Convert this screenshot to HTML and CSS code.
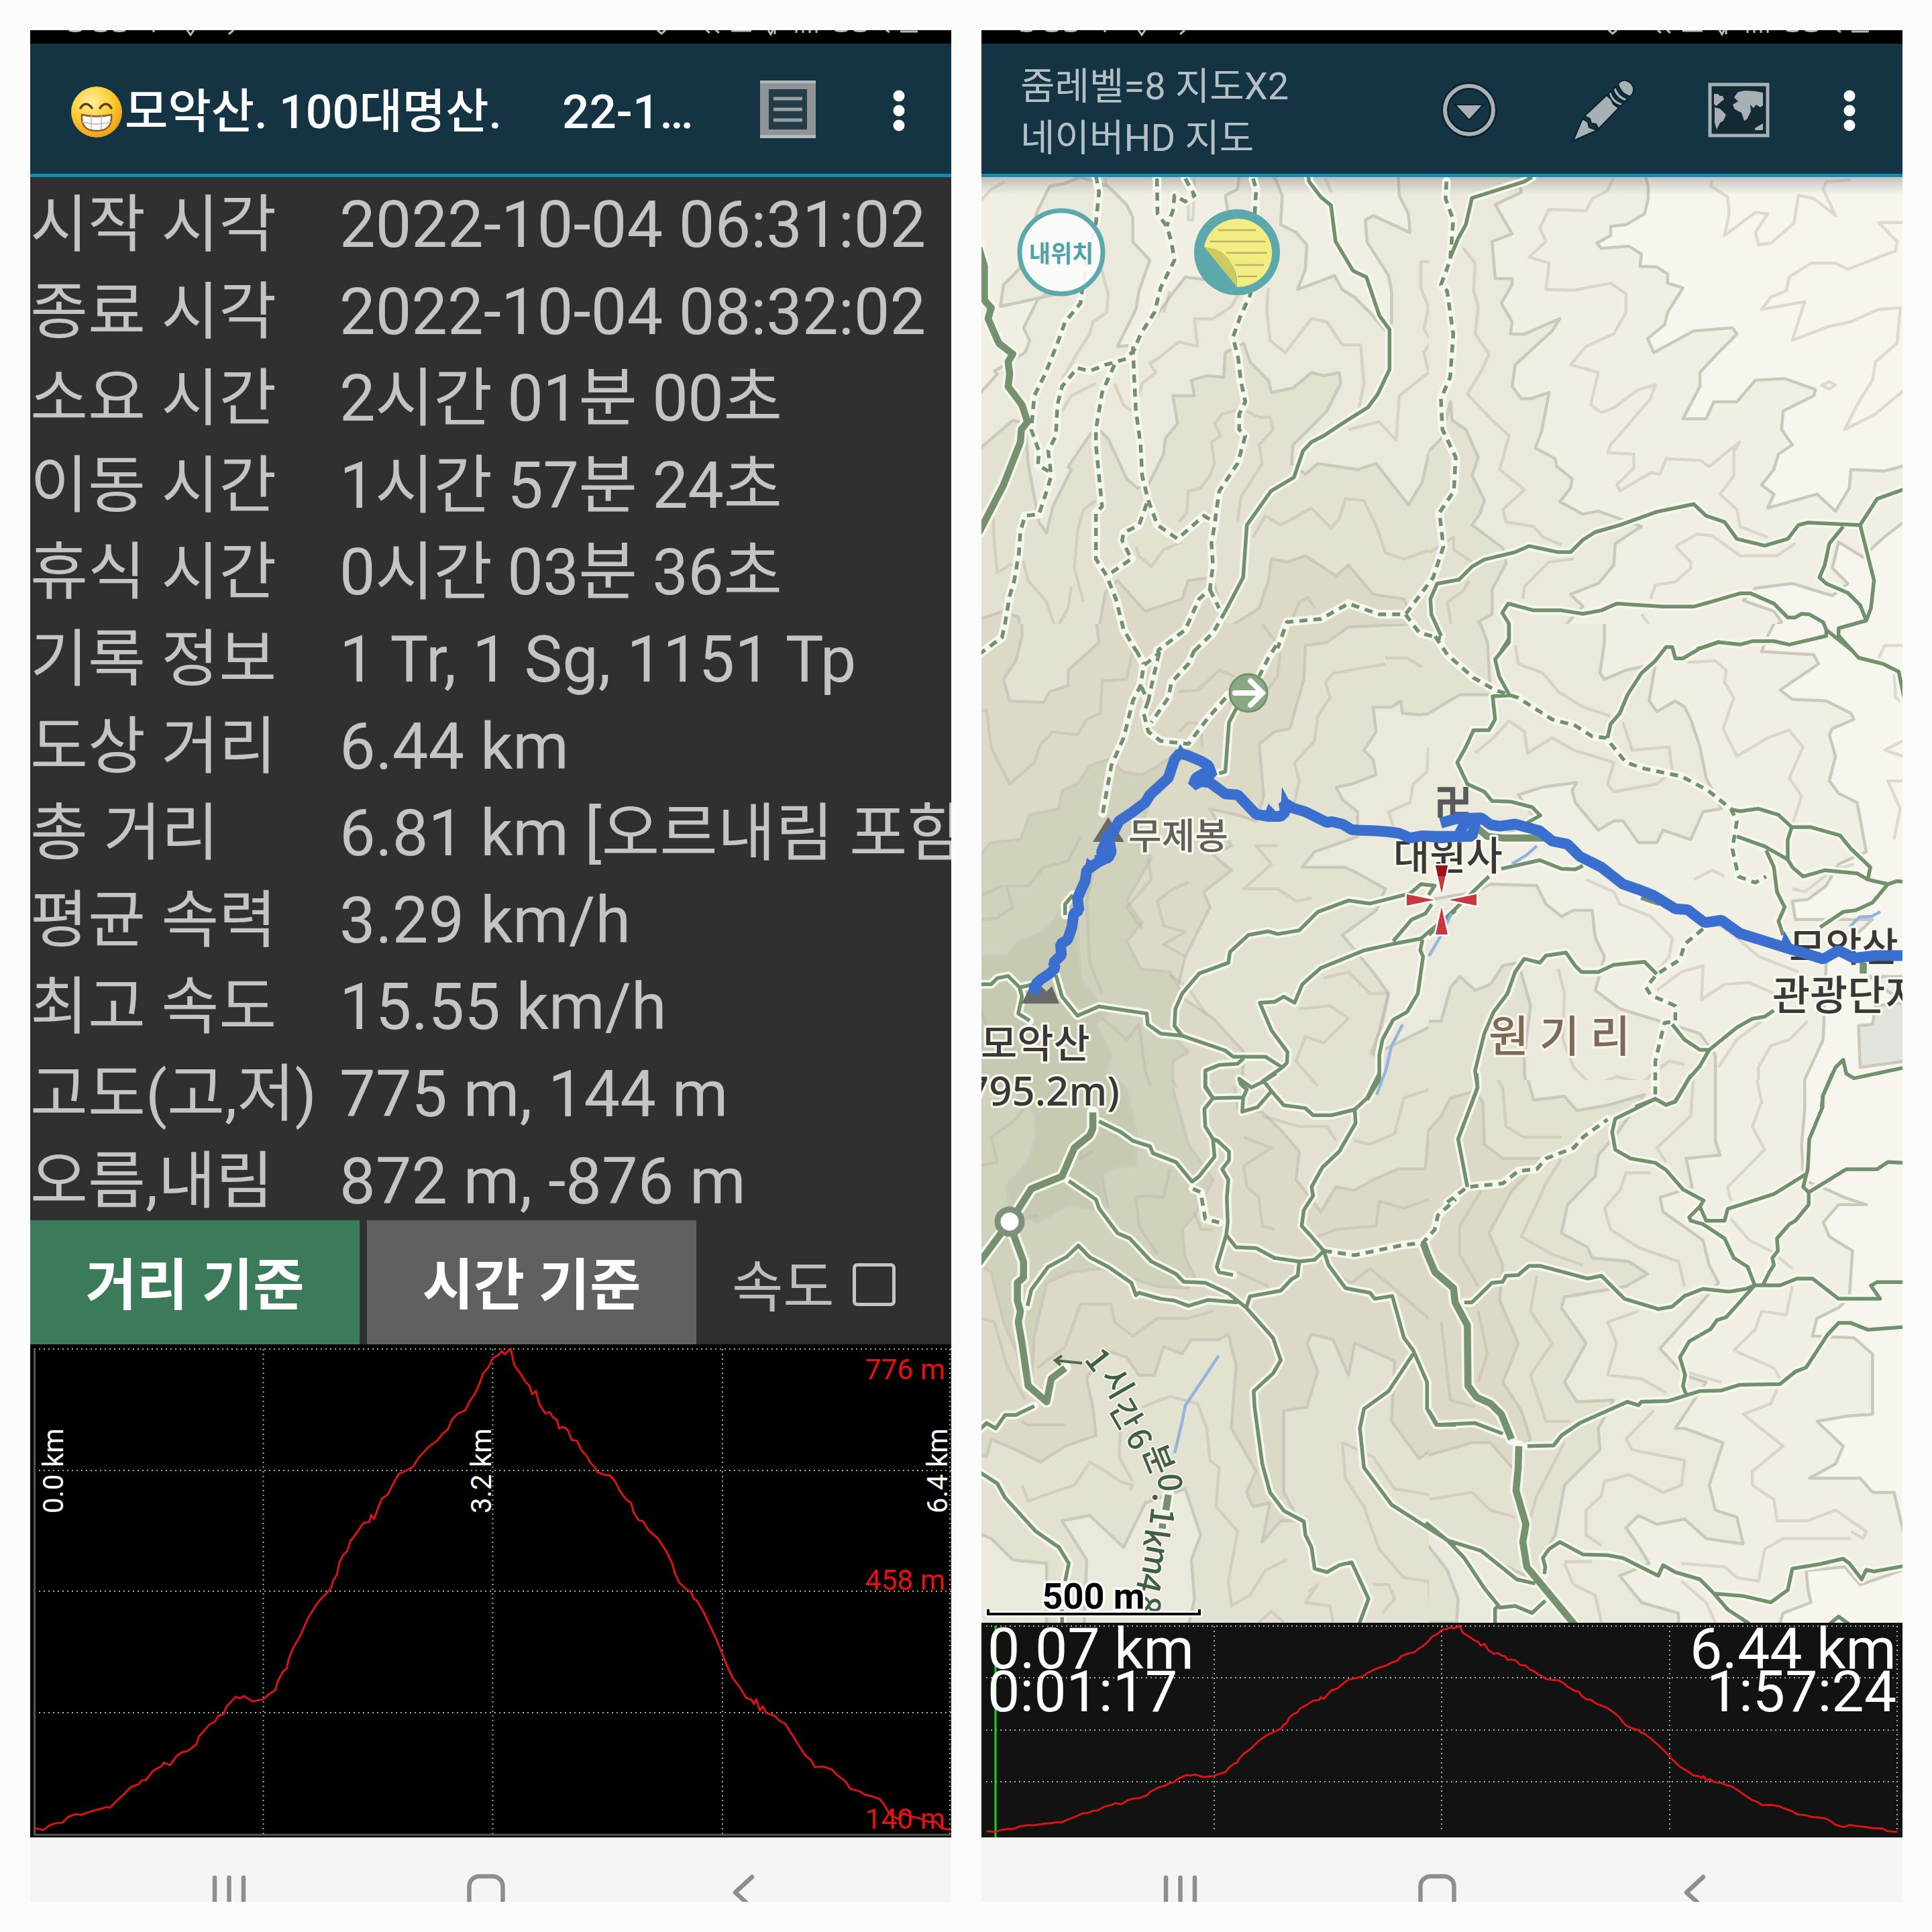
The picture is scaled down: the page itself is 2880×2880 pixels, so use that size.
FILE: index.html
```html
<!DOCTYPE html>
<html lang="ko">
<head>
<meta charset="utf-8">
<title>모악산 트랙 기록</title>
<link rel="stylesheet" href="styles.css">
</head>
<body>
<main class="page">
<section class="phone">
  <svg class="status" viewBox="0 0 1373 20"><g fill="none" stroke="#bbb" stroke-width="3"><path d="M58 0q9 3 18 0M96 0q9 3 18 0M124 0q9 3 18 0M184 0v3M234 0l5 7 5-7M296 6l7-6M935 0l6 5 6-5M1008 0l5 4M1022 0l5 4M1045 1h30M1100 0l4 6 3-6M1110 0v6M1142 0v4M1152 0v4M1162 0v4M1172 0v4M1200 0q9 3 18 0M1228 0q9 3 18 0M1276 0l5 3M1297 2h26"/></g></svg>
  <header class="bar">
    <svg class="emoji" viewBox="0 0 78 78"><defs><radialGradient id="face" cx=".4" cy=".3" r=".75"><stop offset="0" stop-color="#fff0a0"/><stop offset=".55" stop-color="#fccb2c"/><stop offset="1" stop-color="#ee9a17"/></radialGradient></defs><circle cx="39" cy="39" r="38" fill="url(#face)"/><path d="M15 33q8-12 17 0M44 33q9-12 17 0" fill="none" stroke="#5d3a12" stroke-width="3.500" stroke-linecap="round"/><path d="M17 43q22 5 44 0q2 24-22 24t-22-24z" fill="#fff" stroke="#8b5a2b" stroke-width="2.500"/><path d="M18 54q21 6 42 0M31 45v20M46 45v20" fill="none" stroke="#c9c2b6" stroke-width="2"/></svg>
    <h1 class="title">모악산. 100대명산.</h1><span class="title date">22-1…</span>
    <svg class="listicon" viewBox="0 0 88 90"><rect x="2" y="2" width="83" height="86" fill="#8f9496"/><rect x="2" y="2" width="83" height="4" fill="#b5b8b9"/><rect x="2" y="83" width="83" height="5" fill="#b5b8b9"/><rect x="15" y="15" width="57" height="60" fill="#233c48"/><path d="M22 29h43M22 45h43M22 61h43" stroke="#9aa1a4" stroke-width="5"/></svg>
    <svg class="dots" viewBox="0 0 20 64"><circle cx="10" cy="10" r="8.500"/><circle cx="10" cy="32" r="8.500"/><circle cx="10" cy="54" r="8.500"/></svg>
  </header>
  <dl class="stats">
    <div><dt>시작 시각</dt><dd>2022-10-04 06:31:02</dd></div>
    <div><dt>종료 시각</dt><dd>2022-10-04 08:32:02</dd></div>
    <div><dt>소요 시간</dt><dd class="dur">2시간 01분 00초</dd></div>
    <div><dt>이동 시간</dt><dd class="dur">1시간 57분 24초</dd></div>
    <div><dt>휴식 시간</dt><dd class="dur">0시간 03분 36초</dd></div>
    <div><dt>기록 정보</dt><dd>1 Tr, 1 Sg, 1151 Tp</dd></div>
    <div><dt>도상 거리</dt><dd>6.44 km</dd></div>
    <div><dt>총 거리</dt><dd>6.81 km <span class="note">[오르내림 포함]</span></dd></div>
    <div><dt>평균 속력</dt><dd>3.29 km/h</dd></div>
    <div><dt>최고 속도</dt><dd>15.55 km/h</dd></div>
    <div><dt>고도(고,저)</dt><dd>775 m, 144 m</dd></div>
    <div><dt>오름,내림</dt><dd>872 m, -876 m</dd></div>
  </dl>
  <div class="tabs">
    <button class="tab active">거리 기준</button>
    <button class="tab">시간 기준</button>
    <label class="speed"><span>속도</span><i class="box"></i></label>
  </div>
  <svg class="chart" viewBox="0 0 1373 735">
    <defs><path id="profile" d="M24 1372L39 1376 49 1366 60 1361 71 1360 80 1348 92 1342 103 1343 120 1335 138 1329 144 1326 150 1328 160 1314 170 1303 185 1283 198 1277 203 1269 210 1268 222 1248 236 1238 240 1230 250 1236 262 1215 270 1208 280 1205 294 1191 299 1173 316 1148 325 1142 331 1129 340 1125 344 1110 352 1099 360 1088 367 1091 374 1086 388 1098 406 1093 414 1084 426 1073 431 1052 440 1031 445 1027 448 1008 456 982 468 955 482 914 496 886 503 875 513 862 519 853 523 836 529 823 533 797 540 780 546 773 551 752 561 735 573 712 583 709 586 695 591 703 598 678 604 659 614 650 622 629 632 606 645 598 656 590 665 571 682 547 697 533 705 519 714 510 721 488 731 475 743 468 750 450 760 430 767 410 773 388 782 375 789 355 799 348 804 340 809 347 819 335 825 370 836 390 844 407 850 414 855 433 861 426 867 455 877 475 884 472 890 484 896 488 900 507 907 504 914 510 921 532 930 534 937 554 946 567 952 581 960 592 964 602 977 608 985 609 994 623 1001 642 1012 661 1020 668 1024 688 1032 705 1040 708 1050 729 1064 744 1078 771 1088 797 1094 823 1100 840 1112 855 1120 861 1124 874 1130 880 1142 907 1151 932 1162 962 1172 994 1180 1020 1190 1048 1202 1068 1212 1090 1221 1094 1225 1103 1229 1094 1235 1117 1240 1109 1246 1123 1260 1129 1268 1140 1277 1146 1291 1174 1303 1199 1311 1215 1320 1224 1327 1240 1342 1239 1356 1246 1364 1257 1378 1271 1386 1287 1401 1292 1411 1300 1422 1303 1435 1309 1441 1318 1451 1340 1465 1352 1475 1340 1485 1346 1500 1350 1515 1358 1529 1358 1538 1372 1555 1376"/></defs>
    <g class="grid"><path d="M6 7H1373M6 188H1373M6 368H1373M6 549H1373M347.500 7V730M689.500 7V730M1032 7V730M1371 7V730"/></g>
    <path d="M6.500 7V731H1373" fill="none" stroke="#555" stroke-width="3"/>
    <svg x="6.400" y="6.700" width="1367" height="720" viewBox="24 335 1531 1045" preserveAspectRatio="none" overflow="visible"><use href="#profile" class="curve"/></svg>
    <g class="axis red"><text x="1364" y="51.500">776 m</text><text x="1364" y="366">458 m</text><text x="1364" y="722">140 m</text></g>
    <g class="axis"><text transform="translate(49 252) rotate(-90)">0.0 km</text><text transform="translate(687 252) rotate(-90)">3.2 km</text><text transform="translate(1367 252) rotate(-90)">6.4 km</text></g>
  </svg>
  <svg class="nav" viewBox="0 0 1373 96"><path d="M275 60V100M296.500 60V100M318 60V100"/><rect x="654.500" y="58" width="50" height="52" rx="15"/><path d="M1076 59L1051 82 1076 105"/></svg>
</section>

<section class="phone">
  <svg class="status" viewBox="0 0 1373 20"><g fill="none" stroke="#bbb" stroke-width="3"><path d="M58 0q9 3 18 0M96 0q9 3 18 0M124 0q9 3 18 0M184 0v3M234 0l5 7 5-7M296 6l7-6M935 0l6 5 6-5M1008 0l5 4M1022 0l5 4M1045 1h30M1100 0l4 6 3-6M1110 0v6M1142 0v4M1152 0v4M1162 0v4M1172 0v4M1200 0q9 3 18 0M1228 0q9 3 18 0M1276 0l5 3M1297 2h26"/></g></svg>
  <header class="bar mapbar">
    <p class="layer">줌레벨=8 지도X2<br>네이버HD 지도</p>
    <svg class="tool drop" viewBox="0 0 84 84"><circle cx="42" cy="42" r="36" fill="none" stroke="#0b2029" stroke-width="11"/><circle cx="42" cy="42" r="36" fill="none" stroke="#a6b0b5" stroke-width="6"/><path d="M21 34H63L42 57z" fill="#a6b0b5" stroke="#0b2029" stroke-width="2"/></svg>
    <svg class="tool pencil" viewBox="0 0 96 96"><g fill="#a6b0b5" stroke="#0b2029" stroke-width="2"><path d="M2 94L16 61 24 66 26 74 38 78z"/><path d="M19 57L52 26 59 32 62 39 70 45 40 76 36 69 29 68 27 61z"/><path d="M55 23L59 20Q62 34 77 38L73 42Q58 38 55 23zM62 17L66 13Q69 26 83 31L80 35Q65 31 62 17z"/><path d="M69 9Q77-1 88 8 97 18 87 28 73 24 69 9z"/></g></svg>
    <svg class="tool world" viewBox="0 0 92 82"><rect x="3" y="3" width="86" height="76" fill="#132a35" stroke="#a6b0b5" stroke-width="5"/><path d="M9 17L15 17 18 20 22 20 24 25 18 30 12 35 9 32zM10 37L18 39 27 48 23 57 18 60 13 70 10 60zM39 22L45 14 56 12 70 13 82 15 82 34 78 37 72 33 68 38 63 33 64 43 58 55 54 57 50 45 40 40 37 33 45 28zM70 68L82 61V71H70z" fill="#a6b0b5"/></svg>
    <svg class="dots" viewBox="0 0 20 64"><circle cx="10" cy="10" r="8.500"/><circle cx="10" cy="32" r="8.500"/><circle cx="10" cy="54" r="8.500"/></svg>
  </header>

  <svg class="map" viewBox="1463 264 1373 2155">
    <defs>
      <linearGradient id="shade" x1="0" y1="0" x2="0" y2="1"><stop offset="0" stop-color="#777" stop-opacity=".4"/><stop offset="1" stop-color="#777" stop-opacity="0"/></linearGradient>
      <g id="roads">
        <g transform="translate(1450 250) scale(.4592)">
          <path d="M1088 20L1092 45 1130 95 1163 122 1178 240 1235 335 1278 355 1320 480 1353 525 1353 655 1315 735 1283 778 1200 830 1140 870 1100 890 1072 920 1043 1005 968 1050 890 1160 878 1330 820 1440"/>
        </g>
        <g transform="translate(2130 250) scale(.4592)">
          <path d="M335 30L310 45 140 98 120 185 95 230 70 290M1545 1043L1455 1075 1400 1160 1230 1152 1200 1160 1165 1205 1090 1227 1000 1205 960 1150 900 1130 860 1092 740 1117 620 1160 540 1183 500 1208 460 1248 420 1248 325 1228 280 1248 180 1272 140 1295 98 1337 27 1350 5 1400 8 1450 40 1520M1400 1160L1445 1340 1435 1430 1420 1470 1330 1495 1330 1525M1345 1165L1300 1220 1285 1290 1268 1330 1290 1350 1360 1380 1400 1420 1420 1470M235 1568L260 1530 260 1480 238 1445 258 1415 340 1437 430 1437 500 1448 560 1437 610 1415 760 1425 860 1425 1010 1382 1045 1382 1120 1415 1165 1460 1190 1460 1210 1448 1235 1450 1280 1475 1290 1500 1375 1568M1290 1500V1520L1170 1548 1120 1537 1050 1537 1010 1548 940 1540 870 1563"/>
        </g>
        <g transform="translate(2130 930) scale(.4592)">
          <path d="M945 58L880 80 825 112 800 112 790 75 770 75 735 120 690 160 645 230 620 290 590 325 580 370M1330 38L1395 110 1475 130 1525 155 1545 250M260 0V60L215 115 228 170 262 232 207 235 215 310 195 345 145 345 120 400 92 450 125 520 180 545 205 575 265 577 335 595 362 622 320 645M980 602L1010 608 1070 600 1135 620 1178 660 1240 660 1335 687 1370 730 1433 790 1425 830 1490 845 1520 835 1545 838M1178 660L1165 700 1165 765M1000 690L1090 722 1165 765 1180 790 1215 820 1285 800 1390 810 1425 830M1095 735L1120 790 1130 870 1155 920 1135 965 1150 1010M1490 845L1440 905 1385 930 1345 935 1270 985M235 795L360 767 430 795 475 797 500 785M195 820L60 950 0 1010M740 1137L700 1097 600 1107 550 1130 495 1130 475 1110 445 1067 380 1077 360 1100 310 1087 280 1130 255 1200 210 1260 180 1330 150 1450 158 1505 135 1568M790 1300L830 1350 880 1383 910 1383 1000 1310 1050 1282 1090 1275 1120 1255M910 1383L880 1435 845 1475 800 1550 770 1562 735 1542 670 1568M1545 1440L1380 1475 1355 1460 1345 1415 1320 1440 1280 1530 1275 1568"/>
        </g>
        <g transform="translate(1450 930) scale(.4592)">
          <path d="M20 1170H60L80 1150 115 1143 152 1180 200 1170M152 1180L160 1210 148 1265 185 1288M270 1140L290 1210 340 1272 410 1242 565 1265 568 1300 610 1330 680 1337 820 1385 845 1405 950 1405 1005 1440M680 1337L655 1305 658 1250 680 1200 735 1135 830 1100 835 1065 895 1010 960 998 990 1007 1060 995 1120 935 1220 898 1290 908 1420 875 1455 845 1500 850 1480 880M1365 1030L1425 960 1470 940 1490 910M1360 1040L1455 1022 1480 1000 1568 930M1460 1025L1453 1060 1462 1080 1445 1200 1410 1260 1365 1285 1330 1350 1320 1400V1480L1280 1545M1360 1040L1270 1060 1130 1117 1070 1170 1045 1230 1010 1210 980 1227 932 1230 970 1320 1022 1390 1020 1425 1005 1440M880 1410L860 1428 800 1432 755 1450V1500L780 1540M1005 1440L940 1485M858 270L832 320 820 480 800 485M325 880L300 910 300 945"/>
        </g>
        <g transform="translate(1450 1600) scale(.4592 .5293)">
          <path d="M755 0V40L780 70 752 100 755 150 780 185 785 235 735 290 712 305 660 250 585 225 575 205 520 190 480 165 410 135M780 70L878 68 890 45 870 30 865 15 905 40 945 22 970 50 925 95 875 108 878 68M945 22L985 0M970 50L1010 90 1080 98 1105 118 1165 118 1240 102 1280 70 1320 0M1240 102L1243 140 1190 220 1135 265 1100 320 1105 345 1075 385 1068 430 1100 460 1140 500 1110 525 1060 530 980 520 920 492 855 490 823 455 828 420 825 350 830 300 810 270 832 245 832 220 795 190 780 185M823 455L792 545 800 560 845 568M1060 530L1055 570 1035 580 1000 612 900 628 888 660M1140 500L1155 540 1210 605 1290 618 1305 635 1362 627 1400 745 1430 780 1475 870 1475 945 1505 990 1568 990M1430 790L1350 895 1270 945 1257 1000 1270 1110 1360 1215 1568 1330M312 303L400 355 410 380 470 450 510 465 580 530 660 565 685 587 755 590 830 620 888 660 975 745 1000 808 975 845 912 895 915 940 940 1100 965 1180 1010 1232 1075 1262 1080 1300 1100 1335 1110 1395 1150 1405 1190 1385 1230 1377 1285 1480 1255 1550M860 645L765 638 700 655 655 640 610 635 540 618 530 625 515 590 440 545 380 518 343 485 305 517 245 545 190 610 178 655M200 937L140 962 105 962 75 1000 45 985 20 1005M20 1122L80 1155 105 1195 205 1290 280 1335 312 1380 300 1430M290 1560V1510"/>
        </g>
        <g transform="translate(2130 1600) scale(.4592 .5293)">
          <path d="M1310 0L1278 65 1278 95 1235 185 1230 270 1215 320 1233 335 1355 270 1455 270 1490 250 1545 252M1233 335V370L1190 415 1170 425 1130 465 1133 500 1115 520 1120 540 1105 560 1085 595M1222 285L1120 340 970 382 960 415 900 415 880 375 845 405 850 415 890 425 960 465 990 520 1035 545 1058 597M880 375L892 358 825 327 770 272 735 252 655 240 605 215 595 165 605 128 735 72 770 88 800 80 850 5M115 645H140L205 590 240 587 250 570 290 568 325 542 360 542 515 578 560 570 635 635 745 664 790 657 830 627 890 607 975 615 1030 607 1058 597 1140 597 1195 578 1245 578 1330 635 1465 635 1435 598 1455 588 1545 588M1058 597L965 687 935 695 915 720 845 755 815 800 832 850 825 880 835 905M320 1050L405 1048 430 1020 490 985 645 925 680 935 690 925 775 923 880 895 950 893 1010 877 1140 875 1190 840 1225 828 1295 735 1330 703 1370 703 1425 722 1545 714M0 950L27 990 150 985 240 1015M-10 1265L60 1315 170 1345 285 1425 345 1437M60 1315L115 1365 180 1450 227 1500 215 1508V1560M227 1505L280 1500 335 1520 378 1485M375 1410L378 1390 370 1365 390 1340 425 1320 500 1355 580 1357 630 1365 745 1415 760 1385 800 1405 880 1425 925 1465 1020 1472 1110 1490 1165 1455 1180 1395 1270 1382 1345 1367 1365 1380 1405 1425 1420 1398 1445 1403 1545 1387M925 1465L970 1510 1040 1550M1295 1555L1330 1530 1370 1555M155 0L158 40 95 185 125 320"/>
        </g>
      </g>
      <g id="ridges">
        <path transform="translate(1450 250) scale(.4592)" d="M20 260L38 320V430L60 455 50 490 85 570 130 605 115 630 120 670 115 710 160 770 178 825 158 850 155 890 100 1030 20 1185"/>
        <path transform="translate(2130 930) scale(.4592)" d="M160 665L190 690 240 695 375 695M690 885L750 905M1410 1100V1135"/>
        <path transform="translate(1450 1600) scale(.4592 .5293)" d="M390 110V155L380 175 330 210 290 290 190 325 150 380 120 418 20 535M120 418L135 460 165 530 165 575 145 590 145 640 155 670 148 700 160 760 180 880 240 925 255 860 300 830M635 1187L627 1230M617 1268L615 1282"/>
        <path transform="translate(2130 1600) scale(.4592 .5293)" d="M-18 478L-5 510 20 560 80 605 85 645 125 710 127 880 155 912 200 930 235 960 268 1030M292 1050L290 1110 283 1175 315 1270 305 1320 318 1390 480 1560"/>
      </g>
      <g id="trails">
        <path transform="translate(1450 250) scale(.4592)" d="M400 25L410 80 400 180 370 300 355 400 350 440 300 500 275 570 235 670 200 740 190 850 215 920 212 965 245 985M598 35L600 150 630 190 645 240 655 300 610 390 590 470 545 540 525 590 500 620 430 640 380 660 340 650 290 710 275 770 270 870 245 920 255 1000 240 1050 215 1125 170 1130 155 1180 150 1250 135 1340 120 1390 105 1480 95 1525 20 1580M690 35L720 90 690 110 655 90 650 140 630 190M520 580L525 700 530 790 545 900 550 1000 570 1080 600 1160 665 1205 750 1130 785 1150M460 640L420 730 400 850 400 900 410 1000 420 1100 400 1120 400 1270 435 1325 465 1400 490 1500 530 1568M565 1090L540 1160 490 1185 485 1210 515 1270 435 1325M910 35L920 70 915 160 930 290 900 415 870 480 845 550 862 620 870 690 885 760 865 800 865 850 885 870 860 960 800 1050 785 1160 775 1220 780 1290 770 1370 735 1400 690 1500 600 1568M770 1370L800 1430M820 1440L780 1510 720 1568M1538 45L1535 100 1560 170 1550 300 1520 380 1540 400 1560 540 1550 680 1520 750 1525 850 1568 940 1562 1050 1515 1120 1528 1230 1495 1330 1450 1390 1405 1450 1320 1450 1220 1415 1130 1465 1020 1475 990 1560M1405 1450L1450 1510 1520 1528"/>
        <path transform="translate(1450 930) scale(.4592)" d="M530 85L555 130M600 85L605 95 555 135 545 200 520 250 490 370 450 460 422 615M605 95L585 180 570 250 545 200M720 85L700 130 645 190 635 240 580 320M570 250L555 290 570 350 610 380 700 390 760 310 830 230M985 70L960 110 930 170"/>
        <path transform="translate(2130 930) scale(.4592)" d="M20 40L60 100 145 175 215 215 290 240 400 310 475 330 530 365 575 370 640 450 700 470 820 495 905 540 980 600 1000 640 985 730 1005 820 1060 840 1095 820M890 990L830 1040 815 1090 740 1137 705 1180 720 1205 800 1240 800 1290 765 1295 735 1420 735 1540"/>
        <path transform="translate(1450 1600) scale(.4592 .5293)" d="M715 325L740 335 755 410 800 420M1140 500L1240 512 1400 483 1460 478 1500 440 1510 400 1568 355"/>
        <path transform="translate(2130 1600) scale(.4592 .5293)" d="M60 363L125 320 240 310 290 275 350 270 380 240 470 210 500 180 580 130"/>
      </g>
    </defs>
    <rect x="1463" y="264" width="1373" height="2155" fill="#f8f5ee"/>
    <svg class="land" x="1450" y="250" width="690" height="700" viewBox="0 0 1503 1524">
      <rect class="h1" x="-20" y="-20" width="1600" height="1600"/>
      <path class="h2" d="M-20 780L80 670 70 660 170 600 185 560 165 520 210 430 260 395 320 400 90 450 100 380 150 330 180 240 210 140 250 60 300 50 350 30 440 60 500 120 520 160 520 240 575 300 540 400 530 460 470 580 530 575 600 475 640 420 690 355 780 365 870 240 830 150 820 90 860 70 870-20H960L1005 90 1000 185 1050 210 1085 250 1080 330 1055 395 1175 350 1200 395 1240 420 1290 470 1350 540 1360 500V400L1350 350 1280 240 1275 170 1300 155 1420 210 1415 150 1385 90 1380-20H1600V1600H-20z"/>
      <path class="h3" d="M-20 950L130 820 170 830 180 960 215 1150 240 1185 260 1100 320 980 310 970 400 840 440 880 500 1010 535 1040 570 1030 620 930 625 880 665 830 650 740H720L710 690 760 675 815 680 820 600 880 570 900 630 960 690 970 730 1040 715 1100 665 1140 675 1190 665 1195 700 1150 790 1040 900 1035 960 1080 995 1120 960 1250 980 1310 960 1380 1050 1415 1095 1460 1020 1480 930 1520 880H1600V1600H-20z"/>
      <path class="h4" d="M-20 1480L100 1440 150 1460 155 1600H-20zM380 1600L410 1500 430 1380 470 1340 560 1440 680 1400 700 1340 780 1330 820 1500 930 1430 960 1340 970 1270 1020 1280 1080 1260 1180 1325 1220 1290 1300 1385 1400 1400 1490 1600z"/>
      <path class="c" d="M28 105L60 70 105 45M435 60L430 35M720 35L715 170 700 170 700 120M415 320L440 410 435 470 390 500 380 540 340 600 290 690 270 780M620 470L640 400M870 400L840 450 780 490 720 490 730 580 670 565 600 620 575 635 595 665 550 700 540 740M960 390L955 460 965 560 1015 600 1100 490 1150 500 1200 575H1260L1270 700 1255 780M1145 35L1165 80M1530 240L1520 305H1455V390L1480 450 1465 525 1490 560 1465 600 1480 665 1385 740 1375 885 1320 825 1220 850M400 700L320 740 290 790M460 700L490 770 530 800M880 780L810 800 785 830 805 870 775 890 785 960 770 1000 740 1040 700 1050 695 1120 670 1150M890 790L930 810 965 810 975 850 930 900 940 960 870 1070 860 1150M400 1080L360 1110 340 1180 330 1300 360 1410M65 1110L70 1220 80 1315 120 1290 165 1280 180 1340 240 1410 270 1500 310 1430 320 1360M530 1230L540 1260 580 1295 620 1240 680 1215M910 1200L950 1130 1000 1160 1100 1105 1165 1170 1190 1140 1210 1075 1270 1080 1310 1160 1340 1250 1400 1270 1490 1240M1040 1460L1060 1410 1090 1395 1110 1430"/>
    </svg>
    <svg class="land" x="2130" y="250" width="710" height="690" viewBox="0 0 1546 1503">
      <path class="h1" d="M-20-20H690L712 60 712 100 700 150 640 185 590 190 590 220 545 245 560 262 650 255 690 280 685 320 740 322 775 345 775 375 825 390 775 470 765 510 710 555 730 600 860 530 985 520 1000 540 940 600 880 665 880 710 825 815 900 815 925 760 1000 760 1060 690 1155 685 1255 720 1250 740 1150 790 1145 850 1180 900 1135 930 1120 980 1080 1030 1120 1060 1100 1105 1260 1060 1320 1115 1365 1040 1370 980 1480 985 1570 960V1130L1490 1190 1450 1225 1410 1265 1330 1215 1310 1300 1360 1350 1310 1390 1180 1350 1060 1365 1020 1405 1120 1440 1145 1475 1090 1510V1600H-20z"/>
      <path class="h2" d="M-20-20H280L300 80 215 120 270 215 205 240 215 360H270L270 380 235 440 270 500 265 540H310L425 490 400 530 280 640 270 710 300 750 330 750 390 730 365 860 345 910 410 945 415 970 465 1010 460 1040 425 1085 500 1125 550 1115 620 1140 690 1165 605 1220 600 1290 550 1350 460 1385 500 1425 410 1520H570V1600H-20z"/>
      <path class="h3" d="M-20 940L40 880 70 760 75 820 120 850 160 940 140 1000 180 1080 165 1125 140 1160 240 1235 250 1285 205 1370V1450L160 1475 200 1510V1600H-20z"/>
      <path class="c" d="M600 30L580 75 530 100 510 140 390 135 360 195 380 240 325 290 390 310 380 395 470 398 590 375 640 410 640 470 600 540 510 580 460 640 550 665 525 770 560 795 600 780 680 720 735 705 720 750 590 900 580 925 665 930 665 975 610 1030 620 1050 720 990 750 995 770 945 880 950 910 970 1010 890 990 920V1000L945 1060 1000 1110 1010 1165 1100 1200M920 40L915 60 970 95 975 150 960 220 1060 145 1100 150 1060 210 1070 250 1110 245 1185 180 1200 90 1250 100 1320 155 1280 70 1290 45 1370 40M1545 178H1460L1520 240 1515 270 1360 330 1320 310H1240L1170 355 1160 400 1110 420 1080 460 1220 435 1180 560 1300 515 1370 500 1460 460 1530 455 1520 570 1450 630 1440 690 1390 770 1350 850 1450 800 1545 720M1275 708L1300 695 1320 705 1300 718zM110 260L150 310 145 400 160 450 150 540 195 605 170 660 125 735 205 820 260 870 230 980 310 1045 240 1110 250 1150 340 1165 370 1200 430 1225M0 1250L80 1200 80 1240 140 1280M130 1340L110 1375 60 1410 75 1500M470 1270L390 1280 310 1360 305 1400M800 1230L850 1280 850 1300 800 1345 735 1355 720 1400M800 1230L870 1190 920 1195 1010 1260 1130 1260 1190 1220M690 1450L720 1490 890 1490 860 1540"/>
    </svg>
    <svg class="land" x="1450" y="930" width="690" height="700" viewBox="0 0 1503 1524">
      <rect class="h3" x="-20" y="-20" width="1600" height="1600"/>
      <path class="h4" d="M-20-20H1540L1420 0 1220 10 1150 60 1080 70 1075 180 1030 340 980 350 930 390 945 560 920 640 860 620 770 600 840 720 780 750 840 800 750 870 770 920 740 980 690 1080 660 1200 780 1280 880 1390 870 1600H-20z"/>
      <path class="h3" d="M160-20V40L140 120 100 180 120 250 230 255 250 220 310 200 310 150 410 60 400-20z"/>
      <path class="h5" d="M-20 800L60 710 155 700 185 620 280 600 290 540 340 520 380 460 440 440 490 480 550 490 650 430 590 560 570 590 530 700 580 760 500 900 550 970 500 1030 545 1120 640 1130 680 1200 640 1330 700 1390 650 1420V1480L700 1600H-20z"/>
      <path class="h6" d="M-20 1080H110L150 1030 230 1000 270 960 310 880 380 860 350 900 340 1000 350 1150 400 1220 440 1260 400 1300 450 1400 430 1450 490 1500V1600H-20z"/>
      <path class="h2" d="M1600 280L1450 295 1395 290 1390 250 1360 270 1300 270 1310 350 1270 410 1300 440 1310 490 1230 520 1180 530 1200 570 1250 610V690L1110 740 1070 790H1210L1260 815 1340 860 1310 930 1200 1010 1300 1130 1350 1200 1300 1400 1500 1300 1520 1180 1600 1150z"/>
      <path class="c" d="M28 280H45L60 400 120 520 200 450 220 390 260 350 340 360 370 310 415 290 420 185 500 180 520 80M670 220L730 215 800 150 850 170M670 350L700 320 740 325 745 400M940 0L1000 80 990 170 930 250M1340 110L1410 110 1460 140M1340 130L1170 160 1145 190 1160 240 1120 300 1110 380 1045 450 1060 510 1040 600M1530 400L1480 405 1475 480 1430 520 1420 580 1350 610 1380 700M28 960L80 955 130 920 110 850 180 850 230 790 310 770 350 690M570 760L580 830 500 920 550 990M700 840L650 860 600 900 620 980 690 1000 620 1040 690 1080M990 720L920 720 970 780 880 860 990 860 1050 900 1100 890M1140 1150L1220 1130 1290 1200 1350 1200 1330 1300 1290 1400M1060 1250L1160 1240 1220 1280 1140 1360 1080 1340 1050 1420 1120 1500M400 770L370 900 380 1100 420 1200M640 1140L700 1180 760 1270M420 1280L500 1350 540 1300 560 1450 600 1568M28 1250L45 1310M28 880L100 850"/>
    </svg>
    <svg class="land" x="2130" y="930" width="710" height="690" viewBox="0 0 1546 1503">
      <rect class="h1" x="-20" y="-20" width="1600" height="1600"/>
      <path class="h0" d="M1600-20H1130L1100 40 1080 90 1250 100 1265 130 1140 215 1180 245 1290 250 1370 290 1380 310 1310 340 1300 360 1320 430 1300 510 1330 550 1390 580 1420 740 1330 780 1290 850 1230 895 1180 900 1190 960 1440 960 1290 1100 1280 1350 1220 1480V1600H1600z"/>
      <path class="h2" d="M-20-20H570V60L555 160 570 180 640 150 735 130 715 250 740 285 800 250 830 270 850 310 880 400 900 500 950 600 890 610 850 700 760 670 740 710H680L630 640 600 640 550 670 475 580 465 540 480 515 370 530 290 555 350 640 200 700-20 700zM-20 900L150 870 200 845 350 850 380 910 430 950 470 930 530 930 540 1020 570 1080 540 1190 620 1250 750 1290 880 1330 930 1400V1600H-20z"/>
      <path class="h3" d="M-20-20H160L190 60 200 230 100 230 0 290H-20zM-20 1290L40 1290 70 1180 100 1145 150 1190 200 1170 240 1110 290 1100 330 1240 310 1400V1460L330 1600H-20z"/>
      <path class="c" d="M280 70L290 130 370 160 420 220 500 270 590 300M150 420L210 370 260 315 310 350 320 420 400 370 470 410 600 450 580 520 600 545 740 520 790 480 780 400 660 410 630 320M840 125L930 120 965 150 960 190 990 240 955 340 1000 430 1100 370 1170 345 1215 400 1170 500 1210 560 1180 650M1545 70H1480L1460 110 1510 150 1515 240 1545 260M1540 380L1480 410 1540 430M1545 510H1490L1530 600 1510 700M510 830L600 870 620 910 720 950 790 1020 780 1080 740 1130M920 960L1000 1020 1070 1080 1200 1130M740 1190L820 1130 890 1110 885 1220 960 1170 1040 1165 1120 1200M420 1120L440 1200 435 1350 470 1440 530 1500 610 1470 690 1490 780 1420 830 1430M1230 1290L1170 1350 1110 1370 1070 1440V1530M1080 1290L1000 1350 940 1440M860 830L920 800 960 820M1180 860L1220 870 1310 800 1380 780"/>
      <path d="M1395 1305L1440 1300 1450 1240 1545 1230V1420L1400 1440z" fill="#e1e5dd"/><path d="M1430 1145H1545V1200H1500z" fill="#e9ebe4"/>
    </svg>
    <svg class="land" x="1450" y="1620" width="690" height="800" preserveAspectRatio="none" viewBox="0 38 1503 1511">
      <rect class="h3" x="-20" y="-20" width="1600" height="1600"/>
      <path class="h4" d="M-20-20H840L860 100 940 110 1000 160 1060 220 1050 300 1130 390 1180 320 1240 330 1300 300 1380 270H1470L1480 160 1600 50V1055L1490 1060 1450 1085 1360 980 1370 810 1240 760 1220 850 1170 750 1100 735 1085 760 1120 840 1085 940 1010 950V1180L1060 1260 1000 1260 940 1320 965 1210 910 1220 890 1180 920 1120 840 1000 855 820 830 735 800 750 710 750 680 790 620 770 590 850 540 850 500 800 430 780 370 860 390 940 400 1020 300 1050 220 1095 140 1060 60 1030 45 1080-20 1060z"/>
      <path class="h5" d="M-20-20H630L700 200 780 300 720 400 680 440 690 520 720 570 700 605 600 600 420 550 320 560 240 590 200 740 190 880 100 700 60 560-20 520z"/>
      <path class="h6" d="M60-20L200 110 210 180 180 250 110 320 120 380 210 420 310 370 430 390 410 290 460 265 530 260 530 160 480-20z"/>
      <path class="h2" d="M-20 1280L60 1310 130 1370 240 1380V1600H-20zM290 1260L380 1245 490 1335 560 1210 690 1170 740 1300 710 1370 720 1480 690 1600H360L370 1370z"/>
      <path class="c" d="M28 260L80 250 60 180 140 130 200 60M350 200L350 240 390 220M530 350L560 345 620 350 640 270M530 350L540 430 600 510M780 440L740 440 720 390M880 260L970 210 880 180M880 260L890 320 930 350 940 430 980 440M940 120L1060 150 1150 150 1180 190M1240 190L1290 200 1370 170 1400 70 1500 40M1120 460L1180 440 1310 430 1320 360 1400 380 1500 350M210 830L300 770 350 650 450 650 460 700 520 740 600 690 700 690 780 670M28 690L70 700 110 820 170 920M160 980L180 990 300 990M860 560L960 600M550 940L640 910 730 930 760 1000 770 1090 800 1110 790 1220 860 1290 830 1430 840 1500 900 1470 950 1400 1020 1370M160 1160L180 1205 260 1180 330 1160 380 1095 430 1120 480 1150 520 1160 510 1175M480 1000L475 1080 520 1150M1200 1040L1210 1140 1270 1220 1320 1340 1400 1420 1480 1430 1490 1546M1200 1040L1300 1080 1370 1170 1568 1200M1170 560L1230 590 1290 550 1360 600 1480 690 1530 760 1530 900M1300 1440L1350 1440 1370 1480 1330 1520M930 1546L970 1515 1010 1546M1090 1460L1120 1440 1080 1490 1160 1500 1170 1546M420 290L440 380M170 410L210 400"/>
    </svg>
    <svg class="land" x="2130" y="1610" width="710" height="810" preserveAspectRatio="none" viewBox="0 19 1546 1530">
      <rect class="h1" x="-20" y="-20" width="1600" height="1600"/>
      <path class="h0" d="M1220-20V100L1210 200 1215 300 1300 330 1350 350 1420 370 1330 370 1280 420 1300 460 1375 500 1365 630 1330 660 1260 690 1245 740 1380 745 1440 790V960L1360 965 1260 980 1345 1050 1320 1100 1235 1140H1400L1440 1180 1510 1180 1540 1290 1600 1290V-20zM1225 1400L1230 1450 1240 1490 1150 1520 1120 1600H1600V1380L1400 1440 1350 1390z"/>
      <path class="h2" d="M-20-20H930V190L945 230 835 240 855 320 750 350 760 390 890 470 910 540 940 590 860 670 750 775 830 850 900 870 800 1000 830 1000 955 1040 910 1160 930 1230 1000 1250 1020 1325 900 1310 830 1255 740 1270 680 1245 640 1280 680 1330 715 1380 620 1415 690 1490 810 1520V1600H-20z"/>
      <path class="h3" d="M-20-20H310L340 75 440 65 480 105 580 90 700 60 610 170 550 230 540 290 450 370 430 450 515 490 530 520 650 530 710 565 640 600 440 630 430 660 510 760 440 870 480 925 600 920 550 1000 555 1060 440 1160 410 1300 370 1360V1440L-20 1270z"/>
      <path class="h4" d="M-20 180L0 160 40 120 70 70 150 50 175 80 180 200 240 240 370 240 270 330 195 450 240 540 230 640 290 760 240 870 300 950 330 1030 270 1110 200 1040 140 1040-20 1080z"/>
      <path d="M-20 1310L60 1400 95 1480 90 1546H-20z" class="h3"/>
      <path class="c" d="M210 0L240 40 250 150 310 180 430 180M170 330L100 430V510L160 600M430 240L380 310 300 460 400 510 500 540M720 280H640L620 330 570 380 590 440 680 490 810 530 830 600M860 0L850 120 740 210 770 250M1060 0L1080 80 1050 150 1090 215 970 320 980 360M980 410L1040 470 1110 500 1180 550M350 570L330 670 400 760 330 850 380 980 460 980M680 670L580 700 610 760 580 850 690 860 770 900M1180 600L1160 680 1080 670 1060 720 990 780 1120 830 1140 860M830 840L950 870M1130 890L1110 930 1020 960 1150 1050 1050 1120 1050 1160 1120 1200 1130 1260H1230L1320 1230 1420 1290 1410 1310 1370 1290M1370 1310L1150 1310 1090 1340 1070 1430 1000 1420 960 1390 820 1380M730 950L640 1030 660 1060 830 1090 820 1160 760 1180 650 1130 570 1150 560 1190 510 1230V1300L560 1330M0 1200L140 1180 200 1230 280 1250M160 670L190 790 160 870M40 700L60 850 70 920 150 940M440 1375H530M440 1380L470 1440 540 1470 560 1546M820 1430L900 1490 930 1546M440 1040L350 1190 330 1250"/>
    </svg>
    <rect x="1463" y="264" width="1373" height="26" fill="url(#shade)"/>

    <use href="#trails" class="halo"/><use href="#roads" class="halo"/><use href="#ridges" class="halo wide"/>
    <use href="#trails" class="trail"/><use href="#roads" class="road"/><use href="#ridges" class="ridge"/>
    <g class="stream"><path d="M1816.500 2021L1796 2052 1767 2095 1762 2120 1751 2166M2164 1362L2145 1400 2130 1425M2091 1527L2074 1560 2066 1595 2052 1632M2291 1261L2275 1275 2254 1288M2803 1359L2790 1366 2772 1367 2757 1382"/></g>
    <circle cx="1505" cy="1821" r="18" fill="#fff" stroke="#7b917a" stroke-width="9"/>

    <g class="label">
      <text x="1682" y="1266" class="gray" font-size="54">무제봉</text>
      <text x="2077" y="1297" font-size="59">대원사</text>
      <text x="1462" y="1577" font-size="59">모악산</text>
      <text x="1669" y="1648" class="num" font-size="60" text-anchor="end">(795.2m)</text>
      <text x="2667" y="1433" font-size="59">모악산</text>
      <text x="2642" y="1506" font-size="61">관광단지</text>
      <text x="2219" y="1568" class="brown" font-size="65" letter-spacing="16">원기리</text>
    </g>
    <path d="M1613 2032L1573 2028M1583 2021L1573 2028 1581 2035" fill="none" stroke="#4e6b50" stroke-width="4"/>
    <g class="rlabel">
      <text dy=".36em" transform="translate(1637 2027) rotate(52)">1</text><text dy=".38em" transform="translate(1666 2061) rotate(60)">시</text><text dy=".38em" transform="translate(1679 2108) rotate(60)">간</text><text dy=".36em" transform="translate(1698 2145) rotate(62)">6</text><text dy=".38em" transform="translate(1728 2175) rotate(68)">분</text><text dy=".36em" transform="translate(1744 2210) rotate(86)">0</text><text dy=".06em" transform="translate(1721 2232) rotate(92)">.</text><text dy=".36em" transform="translate(1732 2261) rotate(97)">1</text><text dy=".38em" transform="translate(1724 2293) rotate(98)">k</text><text dy=".27em" transform="translate(1719 2326) rotate(101)">m</text><text dy=".36em" transform="translate(1713 2360) rotate(103)">4</text><text dy=".36em" transform="translate(1712 2392) rotate(97)">8</text>
    </g>
    <path d="M1523 1496L1535 1472 1545 1480 1552 1470 1560 1478 1568 1470 1579 1496zM1629 1255L1652 1218 1676 1255z" fill="#69696a"/>
    <path d="M2143 1177H2165.500V1214H2189M2147 1219V1195.500H2185V1173" fill="none" stroke="#59595b" stroke-width="7.500"/>
    <g><circle cx="1861" cy="1033" r="28" fill="#88a981" stroke="#6f9268" stroke-width="3"/><path d="M1841 1033H1880M1864 1015L1882 1033 1864 1051" fill="none" stroke="#fff" stroke-width="8" stroke-linecap="round"/></g>

    <g class="track">
      <path transform="translate(1450 930) scale(.4592)" d="M203 1185L205 1170 220 1155 250 1135 268 1118 262 1100 288 1075 285 1040 308 1025 322 985 328 940 345 930 340 890 365 835 370 800 405 775 425 765 418 740 440 690 460 670 475 640 520 610 560 580 575 555 635 500 655 440 672 420 700 428 740 445 765 460 778 495 750 485 725 500 715 525 740 512 770 515 820 552 860 555 920 618 960 625 1000 625 1015 610 1010 580 1040 598 1080 610 1150 645 1165 642 1200 650 1230 668 1260 670 1310 672 1350 675 1385 680 1420 695 1460 688 1500 690 1581 690"/>
      <path transform="translate(1450 930) scale(.4592)" d="M440 690L450 740 440 760 415 765"/>
      <path transform="translate(2130 930) scale(.4592)" d="M0 690L40 695 90 690 140 690 150 650M55 642L90 632 170 630 200 652 230 657 280 650 360 672 400 705 450 715 490 755 560 790 630 845 680 862 730 882 800 925 840 928 895 970 950 962 1010 1005 1090 1030 1170 1055 1230 1072 1280 1088 1330 1060 1380 1085 1450 1077 1548 1077M95 690L115 650"/>
    </g>
    <g fill="#3a6fd0"><path d="M1909 1208L1911 1173 1925 1200zM1886 1210L1891 1198 1904 1212zM1753 1125L1759 1109 1768 1122zM1618 1290L1620 1279 1634 1288zM1535 1465L1533 1478 1544 1482 1552 1466zM2653 1414L2660 1388 2675 1414z"/></g>

    <g class="cross"><path d="M2140 1290H2158L2149 1332zM2140 1393H2158L2149 1352zM2097 1333V1350L2138 1341.500zM2201 1333V1350L2160 1341.500z"/></g>
    <path d="M2140 1290H2158L2155 1306H2143.500z" fill="#9e1014"/>

    <circle cx="1582" cy="376" r="62" fill="#fdfefc" fill-opacity=".9" stroke="#5ba9ad" stroke-width="7"/>
    <text x="1582" y="391" class="here">내위치</text>
    <circle cx="1844" cy="376" r="64" fill="#5ba9ad"/>
    <path d="M1795 368A51 51 0 1 1 1844 428Q1846 380 1795 368z" fill="#f2ec82"/>
    <path d="M1795 368Q1842 372 1844 428z" fill="#cbcb60"/>
    <path d="M1816 343H1872M1804 360H1886M1828 377H1889M1841 395H1884M1845 412H1874" stroke="#b9b366" stroke-width="2.500"/>

    <text x="1630" y="2398" class="scale" text-anchor="middle">500 m</text>
    <path d="M1473 2399V2406H1788V2399" fill="none" stroke="#fff" stroke-width="9"/>
    <path d="M1473 2399V2406H1788V2399" fill="none" stroke="#000" stroke-width="4"/>
  </svg>

  <svg class="chart mini" viewBox="0 0 1373 320">
    <g class="grid"><path d="M7 5H1366M7 82H1366M7 160H1366M7 237H1366M347 5V313M686 5V313M1026 5V313M1365 5V313"/></g>
    <path d="M21 5V320" stroke="#16d816" stroke-width="3"/>
    <svg x="7.500" y="5" width="1358" height="308" viewBox="24 335 1531 1045" preserveAspectRatio="none" overflow="visible"><use href="#profile" class="curve"/></svg>
    <g class="big"><text x="9" y="67.500">0.07 km</text><text x="9" y="131.500">0:01:17</text><text x="1364" y="67.500" text-anchor="end">6.44 km</text><text x="1364" y="131.500" text-anchor="end">1:57:24</text></g>
  </svg>
  <svg class="nav" viewBox="0 0 1373 96"><path d="M275 60V100M296.500 60V100M318 60V100"/><rect x="654.500" y="58" width="50" height="52" rx="15"/><path d="M1076 59L1051 82 1076 105"/></svg>
</section>
</main>
</body>
</html>
```
FILE: styles.css
```css
* { box-sizing: border-box; margin: 0; padding: 0; }
body { background: #fcfcfc; font-family: Roboto, "Noto Sans CJK KR", sans-serif; }
svg { display: block; flex: none; }
.page { display: flex; gap: 45px; width: 2880px; height: 2880px; padding: 45px 44px 45px 45px; overflow: hidden; }
.phone { display: flex; flex-direction: column; width: 1373px; height: 2790px; overflow: hidden; background: #303030; }
.status { width: 1373px; height: 20px; background: #000; }

.bar { display: flex; align-items: center; flex: none; height: 199px; padding: 0 68px 0 60px; background: #143444; border-bottom: 5px solid #148ab0; }
.emoji { width: 78px; height: 78px; margin-top: 10px; }
.title { font-size: 70px; font-weight: 500; line-height: 90px; color: #fff; white-space: nowrap; margin: 10px 0 0 3px; }
.title.date { margin-left: 90px; font-size: 71px; }
.listicon { width: 88px; height: 90px; margin-left: auto; margin-top: 2px; }
.dots { width: 20px; height: 64px; fill: #fff; margin-left: 111px; margin-top: 6px; }
.mapbar { padding-right: 69px; }
.layer { font-size: 56px; font-weight: 400; line-height: 77px; color: #b4c0c6; white-space: nowrap; margin: 12px 0 0 -2px; }
.tool { margin-top: 3px; }
.tool.drop { width: 84px; height: 84px; margin-left: auto; }
.tool.pencil { width: 96px; height: 96px; margin-left: 111px; }
.tool.world { width: 92px; height: 82px; margin-left: 107px; }
.mapbar .dots { margin-left: 109px; }

.stats { flex: none; height: 1555px; padding-top: 7px; overflow: hidden; font-size: 95.5px; line-height: 129.6px; color: #c4c4c4; }
.stats div { display: flex; height: 129.6px; white-space: nowrap; }
.stats dt { flex: none; width: 461px; font-size: 93.5px; }
.dur { letter-spacing: -.7px; }
.note { font-size: 94px; }
.tabs { display: flex; flex: none; height: 185px; gap: 11px; }
.tab { width: 491px; padding-top: 9px; border: 0; background: #606060; color: #fff; font: 700 83px/1 Roboto, "Noto Sans CJK KR", sans-serif; }
.tab.active { background: #3c7b59; }
.speed { display: flex; align-items: center; gap: 27px; padding-left: 42px; font-size: 83px; color: #bdbdbd; }
.box { width: 64px; height: 64px; border: 5px solid #c4c4c4; border-radius: 7px; margin-top: 6px; }

.chart { width: 1373px; height: 735px; background: #000; }
.chart.mini { height: 320px; background: #121212; }
.grid path { fill: none; stroke: #aaa; stroke-width: 2; stroke-dasharray: 2 5; }
.curve { fill: none; stroke: #d91414; stroke-width: 3; }
#profile { vector-effect: non-scaling-stroke; }
.axis { font-size: 42px; fill: #fff; }
.axis.red { font-size: 42.5px; fill: #e01212; text-anchor: end; }
.big { font-size: 86px; fill: #fff; }
.nav { width: 1373px; height: 96px; background: #f5f5f5; fill: none; stroke: #8e8e8e; stroke-width: 6.5; stroke-linecap: round; stroke-linejoin: round; }

.map { width: 1373px; height: 2155px; }
.map path { vector-effect: non-scaling-stroke; }
.land path, .land rect { stroke: #cbc9bb; stroke-width: 4.5; stroke-linejoin: round; }
.land .c { fill: none; stroke: #b9b6a6; stroke-opacity: .42; stroke-width: 4.5; }
.h0 { fill: #f8f5ee; }
.h1 { fill: #f1efe4; }
.h2 { fill: #ebe9dc; }
.h3 { fill: #e3e2d0; }
.h4 { fill: #dcdac6; }
.h5 { fill: #d0d2bc; }
.h6 { fill: #c5cab1; }
.halo, .road, .ridge, .trail { fill: none; stroke-linejoin: round; }
.halo { stroke: #f5f6ee; stroke-width: 13; stroke-linecap: round; }
.halo.wide { stroke-width: 18; }
.road { stroke: #73906c; stroke-width: 5.5; }
.ridge { stroke: #76916e; stroke-width: 10.5; }
.trail { stroke: #73906c; stroke-width: 5.5; stroke-dasharray: 12 9; }
.stream path { fill: none; stroke: #93b4dc; stroke-width: 4.5; }
.track path { fill: none; stroke: #3a6fd0; stroke-width: 16; stroke-linejoin: bevel; stroke-linecap: square; }
.cross path { fill: #c8383c; stroke: #fff; stroke-width: 5; paint-order: stroke; }
.label text, .rlabel text { font-family: "Noto Sans CJK KR", sans-serif; font-weight: 500; fill: #3b3737; paint-order: stroke; stroke: #f7f5ec; stroke-width: 7; stroke-linejoin: round; }
.label .gray { fill: #62605a; }
.label .brown { fill: #7f6b55; }
.label .num { font-family: "Noto Sans", sans-serif; font-weight: 500; }
.rlabel text { font-size: 48px; fill: #3f5f46; text-anchor: middle; stroke-width: 4; }
.here { font: 700 35px "Noto Sans CJK KR", sans-serif; fill: #4fa3a8; text-anchor: middle; }
.scale { font: 700 54px Roboto, sans-serif; fill: #000; paint-order: stroke; stroke: #fff; stroke-width: 7; }
```
